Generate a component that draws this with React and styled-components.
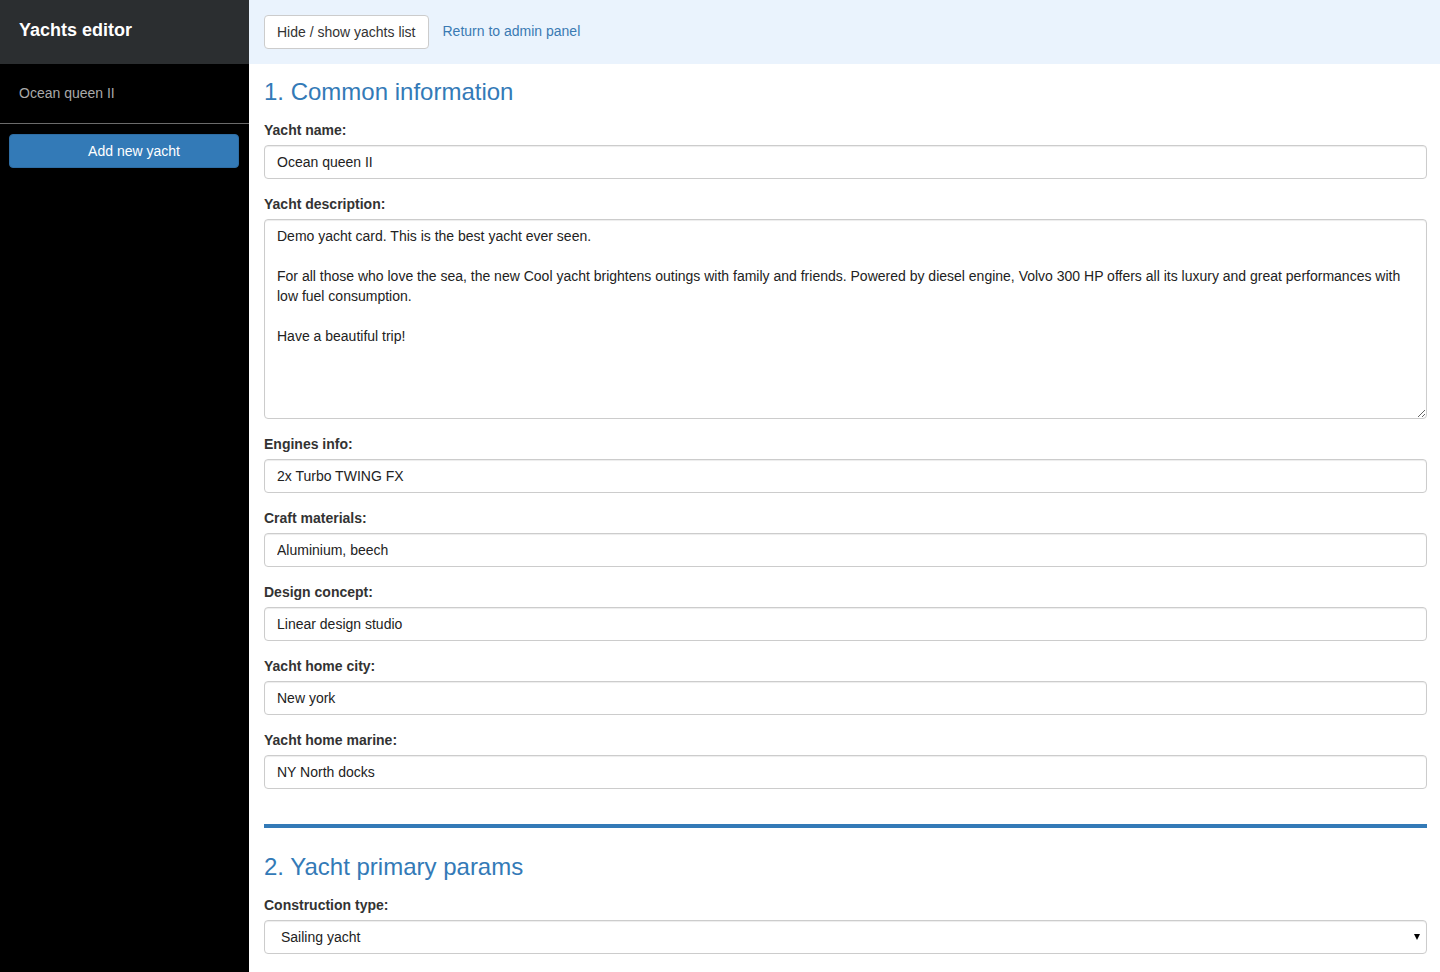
import React from "react";
import styled, { createGlobalStyle } from "styled-components";

const GlobalStyle = createGlobalStyle`
  * { box-sizing: border-box; }
  html, body { margin: 0; padding: 0; }
  body {
    font-family: "Liberation Sans", Arial, Helvetica, sans-serif;
    font-size: 14px;
    line-height: 1.42857;
    color: #333;
    background: #fff;
  }
`;

const Layout = styled.div`
  display: flex;
  min-height: 100vh;
`;

const Sidebar = styled.aside`
  width: 249px;
  flex: 0 0 249px;
  background: #000;
  display: flex;
  flex-direction: column;
`;

const SidebarHeader = styled.div`
  height: 64px;
  background: #2b2e30;
  display: flex;
  align-items: center;
  padding: 4px 19px 6px;
  color: #fff;
  font-weight: bold;
  font-size: 18px;
`;

const YachtItem = styled.div`
  height: 60px;
  display: flex;
  align-items: center;
  padding: 0 19px;
  color: #a9a9a9;
  font-size: 14px;
  border-bottom: 1px solid #6b6b6b;
  cursor: pointer;
`;

const SidebarActions = styled.div`
  padding: 10px 10px 10px 9px;
`;

const PrimaryButton = styled.button`
  width: 100%;
  height: 34px;
  padding: 0 0 0 20px;
  border: 1px solid #2e6da4;
  border-radius: 4px;
  background: #337ab7;
  color: #fff;
  font-family: inherit;
  font-size: 14px;
  cursor: pointer;
`;

const Main = styled.main`
  flex: 1;
  min-width: 0;
  display: flex;
  flex-direction: column;
`;

const TopBar = styled.div`
  height: 64px;
  background: #eaf3fd;
  display: flex;
  align-items: center;
  gap: 14px;
  padding: 0 15px 1px;
`;

const DefaultButton = styled.button`
  height: 34px;
  padding: 6px 12px;
  border: 1px solid #ccc;
  border-radius: 4px;
  background: #fff;
  color: #333;
  font-family: inherit;
  font-size: 14px;
  cursor: pointer;
`;

const Link = styled.a`
  color: #3a7ab3;
  text-decoration: none;
  font-size: 14px;
  margin-top: 1px;
`;

const Content = styled.div`
  padding: 15px 13px 0 15px;
`;

const SectionTitle = styled.h3`
  margin: ${(p) => (p.$first ? "0 0 15px" : "26px 0 14px")};
  font-size: 24px;
  font-weight: 500;
  line-height: 1.1;
  color: #337ab7;
  font-family: "Liberation Sans", Arial, sans-serif;
`;

const FormGroup = styled.div`
  margin-bottom: 15px;
`;

const Label = styled.label`
  display: block;
  margin-bottom: 5px;
  font-weight: bold;
  font-size: 14px;
  line-height: 20px;
  color: #333;
`;

const Input = styled.input`
  display: block;
  width: 100%;
  height: 34px;
  padding: 6px 12px;
  font-family: inherit;
  font-size: 14px;
  line-height: 20px;
  color: #222;
  background: #fff;
  border: 1px solid #ccc;
  border-radius: 4px;
  box-shadow: inset 0 1px 1px rgba(0, 0, 0, 0.075);
  outline: none;
`;

const TextArea = styled.textarea`
  display: block;
  width: 100%;
  height: 200px;
  padding: 6px 12px;
  font-family: inherit;
  font-size: 14px;
  line-height: 20px;
  color: #222;
  background: #fff;
  border: 1px solid #ccc;
  border-radius: 4px;
  box-shadow: inset 0 1px 1px rgba(0, 0, 0, 0.075);
  resize: vertical;
  outline: none;
`;

const Divider = styled.hr`
  margin: 35px 0 0;
  border: 0;
  height: 4px;
  background: #337ab7;
`;

const SelectWrap = styled.div`
  position: relative;
`;

const Select = styled.select`
  display: block;
  width: 100%;
  height: 34px;
  padding: 6px 30px 6px 16px;
  font-family: inherit;
  font-size: 14px;
  color: #222;
  background: #fff;
  border: 1px solid #ccc;
  border-radius: 4px;
  box-shadow: inset 0 1px 1px rgba(0, 0, 0, 0.075);
  appearance: none;
  -webkit-appearance: none;
  outline: none;
`;

const Caret = styled.span`
  position: absolute;
  right: 7px;
  top: 14px;
  width: 0;
  height: 0;
  border-left: 3.5px solid transparent;
  border-right: 3.5px solid transparent;
  border-top: 6px solid #000;
  pointer-events: none;
`;

const description = `Demo yacht card. This is the best yacht ever seen.

For all those who love the sea, the new Cool yacht brightens outings with family and friends. Powered by diesel engine, Volvo 300 HP offers all its luxury and great performances with low fuel consumption.

Have a beautiful trip!`;

const fields = [
  ["Engines info:", "2x Turbo TWING FX"],
  ["Craft materials:", "Aluminium, beech"],
  ["Design concept:", "Linear design studio"],
  ["Yacht home city:", "New york"],
  ["Yacht home marine:", "NY North docks"],
];

export default function App() {
  return (
    <>
      <GlobalStyle />
      <Layout>
        <Sidebar>
          <SidebarHeader>Yachts editor</SidebarHeader>
          <YachtItem>Ocean queen II</YachtItem>
          <SidebarActions>
            <PrimaryButton>Add new yacht</PrimaryButton>
          </SidebarActions>
        </Sidebar>
        <Main>
          <TopBar>
            <DefaultButton>Hide / show yachts list</DefaultButton>
            <Link href="#">Return to admin panel</Link>
          </TopBar>
          <Content>
            <SectionTitle $first>1. Common information</SectionTitle>
            <FormGroup>
              <Label>Yacht name:</Label>
              <Input defaultValue="Ocean queen II" />
            </FormGroup>
            <FormGroup>
              <Label>Yacht description:</Label>
              <TextArea defaultValue={description} />
            </FormGroup>
            {fields.map(([label, value]) => (
              <FormGroup key={label}>
                <Label>{label}</Label>
                <Input defaultValue={value} />
              </FormGroup>
            ))}
            <Divider />
            <SectionTitle>2. Yacht primary params</SectionTitle>
            <FormGroup>
              <Label>Construction type:</Label>
              <SelectWrap>
                <Select defaultValue="sailing">
                  <option value="sailing">Sailing yacht</option>
                  <option value="motor">Motor yacht</option>
                </Select>
                <Caret />
              </SelectWrap>
            </FormGroup>
          </Content>
        </Main>
      </Layout>
    </>
  );
}
